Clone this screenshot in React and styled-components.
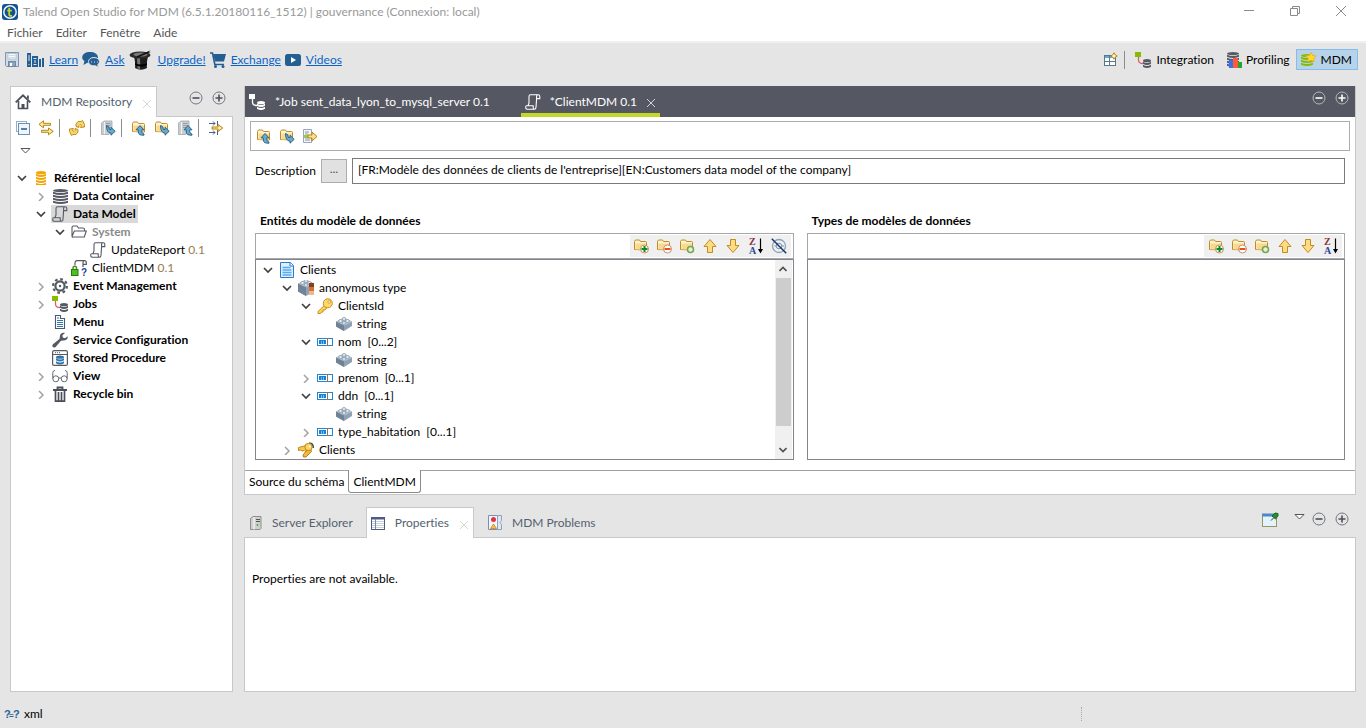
import React from 'react';
import styled, { createGlobalStyle, css } from 'styled-components';

const GlobalStyle = createGlobalStyle`
  *, *::before, *::after { box-sizing: border-box; }
  body {
    margin: 0;
    background: #e5e5e5;
    color: #000;
    font: 12px/18px Lato, "Noto Sans", sans-serif;
    font-variant-ligatures: none;
  }
  button, input { font: inherit; font-variant-ligatures: none; color: inherit; }
  svg { display: block; flex: none; }
`;

/* ---------- icons ---------- */

const Icon = ({ w = 16, h = 16, children, ...rest }) => (
  <svg width={w} height={h} viewBox={`0 0 ${w} ${h}`} fill="none" aria-hidden="true" {...rest}>
    {children}
  </svg>
);

const TalendLogo = () => (
  <Icon w={16} h={16}>
    <rect width="16" height="16" rx="3" fill="#13518f" />
    <circle cx="8" cy="8" r="6.2" stroke="#e9f2f8" strokeWidth="1.5" />
    <path d="M7.2 3.8v6.4q0 1.7 1.7 1.7h1.2M5.2 6.6h4.6" stroke="#c3d82c" strokeWidth="1.8" />
  </Icon>
);

const SaveIcon = () => (
  <Icon>
    <path d="M1.500.5h13v14h-12l-1-1z" fill="#cfdbe8" stroke="#7d94b2" />
    <rect x="4" y="1.500" width="8" height="5.500" fill="#f7fafc" stroke="#9badc4" strokeWidth=".6" />
    <path d="M5 3.500h6M5 5.500h6" stroke="#c9d4e0" strokeWidth=".8" />
    <rect x="4.500" y="9.500" width="7" height="5" fill="#8fa3bb" stroke="#7088a8" />
    <rect x="6" y="11" width="2" height="3" fill="#fff" />
  </Icon>
);

const BooksIcon = () => (
  <Icon w={17} h={16}>
    <path d="M0 1h4v14H0zM5 4h6v11H5zM12 7h2v8h-2zM15 6h2v9h-2z" fill="#235f92" />
    <path d="M2 3v6M2 12v1M6.500 6.500h3M6.500 12.500h3M8 8v3" stroke="#dfe8ef" />
  </Icon>
);

const ChatIcon = () => (
  <Icon w={18} h={16}>
    <path d="M8 0c4.400 0 8 2 8 5.500S12.400 11 8 11c-.9 0-1.800-.1-2.600-.3L1.500 13l.9-4C1 8 .2 6.900.2 5.500.2 2 3.600 0 8 0z" fill="#235f92" />
    <path d="M12 5.500c3 0 5.500 1.700 5.500 4 0 1.400-.8 2.400-1.800 3.100l.8 2.900-3-1.700c-3.800.4-7-1.300-7-4.300 0-2.300 2.500-4 5.500-4z" fill="#235f92" stroke="#e5e5e5" />
    <path d="M9 10h1M12 10h1M15 10h1" stroke="#dfe8ef" />
  </Icon>
);

const HatIcon = () => (
  <Icon w={24} h={20}>
    <path d="M5 7h14c-1 3-1.500 8-1 11q-6 3.500-12 0c.5-3 0-8-1-11z" fill="#1d1d1d" />
    <path d="M8 8h3q.5 6 0 11L8.500 18.500z" fill="#777" />
    <path d="M6 13q6 3 12 0v2q-6 3-12 0z" fill="#000" />
    <ellipse cx="11" cy="5" rx="10.500" ry="3.600" fill="#2b2b2b" />
    <ellipse cx="11.500" cy="4.500" rx="7" ry="2" fill="#777" />
    <path d="M8 7L22 1" stroke="#111" strokeWidth="1.600" />
    <path d="M20.500 1.500L23 .5" stroke="#eee" strokeWidth="1.500" />
  </Icon>
);

const CartIcon = () => (
  <Icon>
    <path d="M0 1h2.500l2.300 11.500H14" stroke="#235f92" strokeWidth="1.600" />
    <path d="M3 2h13l-2 7.500H5z" fill="#235f92" />
    <circle cx="5.500" cy="14.500" r="1.500" fill="#235f92" />
    <circle cx="13" cy="14.500" r="1.500" fill="#235f92" />
  </Icon>
);

const VideoIcon = () => (
  <Icon>
    <rect y="2" width="16" height="12" rx="2.500" fill="#235f92" />
    <path d="M6 5l5 3-5 3z" fill="#fff" />
  </Icon>
);

const HomeIcon = () => (
  <Icon>
    <path d="M.7 8.300L8 1.300l7.300 7" stroke="#4b4f5a" strokeWidth="1.800" />
    <path d="M12 1.500h1.800v4L12 4z" fill="#4b4f5a" />
    <path d="M3.500 7v7.500h9V7" stroke="#4b4f5a" strokeWidth="1.600" />
    <path d="M6.500 15v-5h3v5z" fill="#4b4f5a" />
  </Icon>
);

const CollapseIcon = () => (
  <Icon w={14} h={14}>
    <rect x=".5" y=".5" width="10" height="10" fill="#fff" stroke="#8fb0cf" />
    <rect x="2.500" y="2.500" width="11" height="11" fill="#eef6fc" stroke="#6b8fb5" />
    <path d="M5 8h6" stroke="#174a86" strokeWidth="1.400" />
  </Icon>
);

const LinkArrowsIcon = () => (
  <Icon>
    <path d="M5.500.8v2.500h7v2h-7v2.500L1 4.300z" fill="#fbe9a6" stroke="#b8860f" strokeLinejoin="round" />
    <path d="M10.500 8v2.300h-7v2h7v2.500l4.800-3.500z" fill="#fbe9a6" stroke="#b8860f" strokeLinejoin="round" />
  </Icon>
);

const RefreshIcon = () => (
  <Icon>
    <path
      d="M7 4L9 1.500h3L13.500.5 15.500 4.500V7L11.500 7.500 12.500 5.500 11 4.500 10 5.500V7.500L7 6.500z"
      fill="#f9d66c" stroke="#b8860f" strokeWidth=".9" strokeLinejoin="round"
    />
    <path
      d="M9 12l-2 2.500H4L2.500 15.500.5 11.500V9L4.500 8.500 3.500 10.500 5 11.500 6 10.500V8.500L9 9.500z"
      fill="#f9d66c" stroke="#b8860f" strokeWidth=".9" strokeLinejoin="round"
    />
  </Icon>
);

const BlueDown = ({ x = 0, y = 0 }) => (
  <path
    transform={`translate(${x} ${y})`}
    d="M.5.5Q3.400.8 3.400 4.500H5V2.300l4.200 4L5 10.200V8.200Q.5 8 .5.500z"
    fill="#6aa9cc" stroke="#1d5c86" strokeWidth=".9" strokeLinejoin="round"
  />
);

const BlueUp = ({ x = 0, y = 0 }) => (
  <path
    transform={`translate(${x} ${y})`}
    d="M4.500.5l4 4.300H6.300v2q0 1.700 2.200 2.200v1.200Q2.800 10.500 2.800 7V4.800H.5z"
    fill="#6aa9cc" stroke="#1d5c86" strokeWidth=".9" strokeLinejoin="round"
  />
);

const Server = () => (
  <>
    <path d="M1.500 3L4 1h8v10l-3 3.500H1.500z" fill="#c9ccd0" stroke="#a4a7ab" strokeWidth=".8" />
    <path d="M6 3.500h4.500M6 5.500h4.500M6 7.500h4.500" stroke="#8d9196" strokeWidth=".8" />
    <path d="M4.500 2v12" stroke="#f0f1f2" />
  </>
);

const ServerDownIcon = () => <Icon><Server /><BlueDown x={6} y={5} /></Icon>;
const ServerUpIcon = () => <Icon><Server /><BlueUp x={6.500} y={5} /></Icon>;

const Folder = () => (
  <>
    <path d="M1.500 11.500v-8l1-1.500h4l1 1.500h5q1 0 1 1v7.500z" fill="#fdf3d0" stroke="#c08a28" strokeLinejoin="round" />
    <path d="M2.500 5.500h10.500v6h-10.500z" fill="#f8d98d" />
  </>
);

const FolderUpIcon = () => <Icon><Folder /><BlueUp x={4.500} y={5} /></Icon>;
const FolderDownIcon = () => <Icon><Folder /><BlueDown x={6} y={5} /></Icon>;

const FolderAddIcon = () => (
  <Icon>
    <Folder />
    <circle cx="11.500" cy="11" r="4" fill="#fff" stroke="#bb9460" />
    <path d="M11.500 8v6M8.500 11h6" stroke="#118a1b" strokeWidth="2" />
  </Icon>
);
const FolderRemoveIcon = () => (
  <Icon>
    <Folder />
    <circle cx="11.500" cy="11" r="4" fill="#fff" stroke="#c19170" />
    <path d="M8.500 11h6" stroke="#e8501e" strokeWidth="2" />
  </Icon>
);
const FolderNewIcon = () => (
  <Icon>
    <Folder />
    <circle cx="11.500" cy="11.500" r="3" fill="#e3efd8" stroke="#74a54b" strokeWidth="1.500" />
  </Icon>
);

const FilterArrowIcon = () => (
  <Icon>
    <path d="M1 3.500h6M5 1.500l2 2-2 2M9.500 1v5M1 12.500h6M5 10.500l2 2-2 2M9.500 10v5" stroke="#47607f" />
    <path d="M4 7h6V4.500L14.800 8 10 11.500V9H4z" fill="#fbe3a0" stroke="#b8860f" strokeLinejoin="round" />
  </Icon>
);

const ExportIcon = () => (
  <Icon>
    <path d="M1.500 1.500h8v13h-8z" fill="#f2f5f9" stroke="#98a5ba" />
    <path d="M3 4h4M3 6h3M3 10h3M3 12h5" stroke="#8494b0" />
    <path d="M2 7h4v3H2z" fill="#9bc94c" />
    <path d="M6 7h4V4l5 4.500L10 13v-3H6z" fill="#fbe08a" stroke="#b38312" strokeLinejoin="round" />
  </Icon>
);

const TriangleIcon = () => (
  <Icon w={11} h={6}>
    <path d="M1 .5h9L5.500 5z" fill="#fff" stroke="#555" />
  </Icon>
);

const RoundIcon = ({ plus, color = '#74777e', bar = '#4c505a' }) => (
  <Icon w={14} h={14}>
    <circle cx="7" cy="7" r="6" stroke={color} />
    <path d={plus ? 'M3.500 7h7M7 3.500v7' : 'M3.500 7h7'} stroke={bar} strokeWidth="1.600" />
  </Icon>
);

const CrossIcon = ({ color = '#d5d5d5', size = 8 }) => (
  <Icon w={size} h={size}>
    <path d={`M0 0L${size} ${size}M${size} 0L0 ${size}`} stroke={color} />
  </Icon>
);

const MinimizeIcon = () => <Icon w={10} h={10}><path d="M0 4.500h10" stroke="#8b8b8b" /></Icon>;
const RestoreIcon = () => (
  <Icon w={10} h={10}>
    <path d="M.5 2.500h7v7h-7zM2.500 2.500v-2h7v7h-2" stroke="#8b8b8b" />
  </Icon>
);

const PerspectiveIcon = () => (
  <Icon w={15} h={15}>
    <rect x="1.500" y="3.500" width="11" height="10" fill="#fff" stroke="#56788d" />
    <path d="M2 5h8" stroke="#6aa4d3" strokeWidth="2" />
    <path d="M6.500 4v9M2 9.500h10" stroke="#56788d" />
    <path d="M11 .8l1.200 2 2 1.200-2 1.200-1.200 2-1.200-2-2-1.200 2-1.200z" fill="#fff4c8" stroke="#b8860f" />
  </Icon>
);

const Discs = ({ x = 0, y = 0, w = 10, n = 4, color = '#555962' }) => (
  <g transform={`translate(${x} ${y})`} fill={color}>
    <ellipse cx={w / 2} cy="1.700" rx={w / 2} ry="1.600" />
    {Array.from({ length: n - 1 }, (_, i) => (
      <path key={i} d={`M0 ${2.700 + i * 3}q${w / 2} 2.500 ${w} 0v2q-${w / 2} 2.600-${w} 0z`} />
    ))}
  </g>
);

const JobIcon = ({ box = '#85bc00', line = '#d9606b', db = '#555962' }) => (
  <Icon w={17} h={16}>
    <rect x="0" y="0" width="6" height="5" fill={box} />
    <path d="M3.500 5v3q0 3.500 4.500 3.500" stroke={line} strokeWidth="1.300" />
    <Discs x={8} y={7} w={8} n={3} color={db} />
  </Icon>
);

const ProfilingIcon = () => (
  <Icon w={16} h={16}>
    <Discs x={1} y={0} w={12} n={5} />
    <rect x="3" y="8" width="5" height="8" fill="#3c6ff0" />
    <rect x="7" y="6" width="5" height="10" fill="#ff5b3a" />
    <rect x="12" y="10" width="4" height="6" fill="#27a52a" />
  </Icon>
);

const MdmIcon = () => (
  <Icon w={16} h={16}>
    <Discs x={0} y={2} w={12} n={4} color="#85bc00" />
    <path d="M10 .5l1.700 3 3.600.5-2.600 2.300.6 3.400L10 8.200 6.700 9.700l.6-3.400L4.700 4l3.600-.5z" fill="#ffd92b" stroke="#f5a81c" strokeWidth=".8" />
  </Icon>
);

const RepoIcon = () => <Icon w={10} h={14}><Discs x={0} y={0} w={10} n={5} color="#f5a400" /></Icon>;
const ContainerIcon = () => <Icon w={15} h={16}><Discs x={0} y={1} w={15} n={5} /></Icon>;

const ModelIcon = ({ color = '#555962' }) => (
  <Icon>
    <path
      d="M5.500.800H13.200q1.600 0 1.600 1.600V4.600H11.600M11.600 4.600V2.400Q11.600.8 13.200.8M5.500.8Q4 .8 4 2.500V9L3 11.800H1.600Q.7 11.800.7 13.400T2.200 15.200h7q1.800 0 1.800-2L11.600 4.600M3 11.800h5.200v1.400q0 2 1 2"
      stroke={color} strokeWidth="1.100"
    />
  </Icon>
);

const OpenFolderIcon = () => (
  <Icon>
    <path d="M1 12V3.500Q1 2 2.500 2H6l1.500 2H12q1.500 0 1.500 1.500V7M1 12.500L3.300 7h12l-2 6H2Q1 13.500 1 12z" stroke="#555962" strokeWidth="1.100" />
  </Icon>
);

const LockedModelIcon = () => (
  <Icon>
    <path d="M4 5V3q0-2.300 2-2.300h7.500q1.800 0 1.800 2v1.600H12V3q0-2.300 1.500-2.300M12 4v3" stroke="#555962" strokeWidth="1.200" />
    <path d="M2 10V8q0-1.800 1.800-1.800T5.500 8v2" stroke="#3e8d18" strokeWidth="1.400" />
    <rect x=".5" y="9.500" width="6.500" height="6" fill="#4fbf1f" stroke="#2b7a10" />
    <text x="10" y="15.500" fontFamily="Liberation Sans, sans-serif" fontWeight="700" fontSize="10" fill="#1c3fa3">?</text>
  </Icon>
);

const GearIcon = () => (
  <Icon>
    <circle cx="8" cy="8" r="6.900" stroke="#555962" strokeWidth="2.200" strokeDasharray="2.700 2.720" />
    <circle cx="8" cy="8" r="4.600" stroke="#555962" strokeWidth="2.200" />
    <circle cx="8" cy="8" r="1.200" fill="#555962" />
  </Icon>
);

const MenuDocIcon = () => (
  <Icon>
    <path d="M3.500 1.500h5v3h4v10h-9z" fill="#fff" stroke="#4a5a70" strokeWidth="1.100" />
    <path d="M5 4h2M5 6.500h6M5 8.500h6M5 10.500h6M5 12.500h6" stroke="#2f74ad" />
  </Icon>
);

const WrenchIcon = () => (
  <Icon>
    <path d="M15.700 4.200L13 6.200l-2.200-.8-.4-2.200L13 1C10.500-.1 7.600 1.600 7.900 4.800L7.400 7 1 12.300c-2 2 .7 4.400 2.600 2.600L9 8.800l2.200-.2c3 .2 5-1.800 4.500-4.400z" fill="#555962" />
  </Icon>
);

const ProcedureIcon = () => (
  <Icon>
    <rect x=".6" y=".6" width="14.800" height="14.800" rx="1.500" fill="#fff" stroke="#555962" strokeWidth="1.200" />
    <path d="M1 4.500h14" stroke="#555962" />
    <path d="M3 2.700h1M5 2.700h1M7 2.700h1" stroke="#555962" />
    <Discs x={4} y={5.500} w={8} n={3} color="#2f74ad" />
  </Icon>
);

const GlassesIcon = () => (
  <Icon>
    <circle cx="3.800" cy="10.800" r="3" stroke="#666a72" />
    <circle cx="12.200" cy="10.800" r="3" stroke="#666a72" />
    <path d="M6.800 10.300q1.200-1 2.400 0M.8 10.500V4.500Q1 2.500 3 2.500M15.200 10.500V4.500Q15 2.500 13 2.500" stroke="#666a72" />
  </Icon>
);

const TrashIcon = () => (
  <Icon>
    <path d="M1 4h14M5.500 4V1.500h5V4" stroke="#4b4f5a" strokeWidth="1.800" />
    <path d="M3.500 5v10.200h9V5M6.500 6v9M9.500 6v9" stroke="#4b4f5a" strokeWidth="1.700" />
  </Icon>
);

const EntityIcon = () => (
  <Icon>
    <path d="M1.500.5h10l3 3v12h-13z" fill="#dcefff" stroke="#2f79ca" />
    <path d="M11 .5v3.500h3.500" fill="#fff" stroke="#2f79ca" />
    <path d="M3.500 5.500h8M3.500 8h9M3.500 10.500h9M3.500 13h9" stroke="#5aaaf0" strokeWidth="1.400" />
  </Icon>
);

const Brick = () => (
  <>
    <path d="M0 5.500l8-3.500 8 3.500v4.500l-8 5-8-4.500z" fill="#8fa1b4" />
    <path d="M0 5.500L8 9.500l8-4L8 2z" fill="#c3cfda" />
    <path d="M8 9.500V15l-8-4.500v-5z" fill="#6f8397" />
    <ellipse cx="4.500" cy="5" rx="2" ry="1.400" fill="#eef3f7" stroke="#7e93a6" strokeWidth=".8" />
    <ellipse cx="11.500" cy="5" rx="2" ry="1.400" fill="#eef3f7" stroke="#7e93a6" strokeWidth=".8" />
    <ellipse cx="8" cy="3" rx="2" ry="1.400" fill="#eef3f7" stroke="#7e93a6" strokeWidth=".8" />
    <ellipse cx="8" cy="7" rx="2" ry="1.300" fill="#eef3f7" stroke="#7e93a6" strokeWidth=".8" />
  </>
);

const BrickIcon = () => <Icon><Brick /></Icon>;
const ComplexIcon = () => (
  <Icon>
    <g transform="translate(0 1)"><Brick /></g>
    <g transform="translate(0 -2)"><Brick /></g>
    <rect x="11" y="3" width="5" height="4" fill="#86421f" />
    <rect x="11" y="7" width="5" height="4" fill="#d2713c" />
    <rect x="11" y="11" width="5" height="4" fill="#f0b58c" />
  </Icon>
);

const KeyIcon = () => (
  <Icon>
    <path d="M8 7L1 13.500V15.500h2.500l1-1.500h1.500v-2H8l2-2.500z" fill="#fbd55a" stroke="#c98f1c" strokeLinejoin="round" />
    <circle cx="10.800" cy="5.300" r="4.500" fill="#fddb68" stroke="#c98f1c" />
    <circle cx="12.200" cy="4" r="1.300" fill="#fff" stroke="#c98f1c" strokeWidth=".8" />
  </Icon>
);

const KeysIcon = () => (
  <Icon>
    <path d="M11 1.200q4.500-.5 4.200 4.800" stroke="#38414d" strokeWidth="1.500" />
    <path d="M9 8l-4 5 .5 2H8l5.500-5.500-1-2.500z" fill="#f3b93a" stroke="#a87410" strokeWidth=".9" strokeLinejoin="round" />
    <path d="M8 3.500L.5 5.500v3l2.500-.5 1 1.200 2-.8 1 1 3-1.500z" fill="#f8c848" stroke="#b8801c" strokeWidth=".9" strokeLinejoin="round" />
    <circle cx="10.500" cy="5" r="3.700" fill="#fcd45a" stroke="#b8801c" strokeWidth=".9" />
    <circle cx="11.800" cy="4.500" r="1" fill="#fff" />
  </Icon>
);

const ElementIcon = () => (
  <Icon>
    <rect x=".5" y="4.500" width="15" height="7" fill="#fff" stroke="#2384cf" />
    <rect x="2" y="6" width="7" height="4" fill="#1c7fd0" />
    <path d="M4.500 7v3M6.500 7v3" stroke="#a9d2f3" strokeWidth=".7" />
    <path d="M10.500 4v8M9 4.500h3M9 11.500h3" stroke="#777" />
  </Icon>
);

const ArrowIcon = ({ down }) => (
  <Icon>
    <path
      d={down ? 'M5.500 1.500h5v6h3.500L8 14.500 2 7.500h3.500z' : 'M5.500 14.500h5v-6H14L8 1.500 2 8.500h3.500z'}
      fill="#fbdc85" stroke="#c48c20" strokeLinejoin="round"
    />
  </Icon>
);

const SortIcon = () => (
  <Icon w={16} h={18}>
    <g fontFamily="Liberation Serif, serif" fontWeight="700" fontSize="10">
      <text x="1" y="8" fill="#8c2f3f">Z</text>
      <text x="1" y="17" fill="#2f4a94">A</text>
    </g>
    <path d="M12.500 1.500v13" stroke="#000" strokeWidth="1.200" />
    <path d="M10 12h5l-2.500 4.500z" fill="#000" />
  </Icon>
);

const HideIcon = () => (
  <Icon>
    <circle cx="8" cy="8" r="6.500" stroke="#8aa4bb" strokeWidth="1.300" />
    <circle cx="8" cy="8" r="2.800" stroke="#7592ad" />
    <path d="M3.500 8h2M11 8h2" stroke="#7592ad" />
    <path d="M.8.800l14.400 14.400" stroke="#1b3470" strokeWidth="1.500" />
  </Icon>
);

const ServerTabIcon = () => (
  <Icon w={12} h={14}>
    <path d="M.5 2.500L3 .5h8v12l-1 1H.5z" fill="#cfcfcf" stroke="#8f8f8f" />
    <path d="M4 1v12.500" stroke="#fff" />
    <path d="M6 3.500h4M6 5.500h4" stroke="#555" />
    <path d="M7.500 8v2" stroke="#4aa84a" strokeWidth="1.500" />
  </Icon>
);

const PropertiesIcon = () => (
  <Icon w={14} h={13}>
    <rect x=".5" y=".5" width="13" height="12" fill="#fff" stroke="#4d5d86" />
    <path d="M0 1.500h14" stroke="#4d5d86" strokeWidth="2" />
    <path d="M1 4.500h12M1 6.500h12M1 8.500h12M1 10.500h12" stroke="#c7cfdd" />
    <path d="M4.500 2v10" stroke="#7b88a8" />
  </Icon>
);

const ProblemsIcon = () => (
  <Icon w={14} h={15}>
    <path d="M.5.5h9v14h-9z" fill="#f4f6fa" stroke="#7b8db0" />
    <path d="M9.500.5h4v5l-1.500 2 1.500 2v5h-4z" fill="#dfe8f2" stroke="#8aa3bd" />
    <circle cx="5.500" cy="4.500" r="2.500" fill="#dd3744" />
    <path d="M5.500 9l3 4.500h-6z" fill="#fbc04a" stroke="#c88316" strokeWidth=".8" />
  </Icon>
);

const PinIcon = () => (
  <Icon w={17} h={15}>
    <rect x=".5" y="2.500" width="14" height="12" fill="#e3f3fa" stroke="#9b9468" />
    <path d="M0 3h12" stroke="#4b88c7" strokeWidth="3" />
    <path d="M9 8.500l3-3" stroke="#333" />
    <path d="M10 4l3-3 3 .5V4l-2.500 3z" fill="#2b8a35" stroke="#186a24" />
  </Icon>
);

const VariableIcon = () => (
  <Icon>
    <g fontFamily="Liberation Sans, sans-serif" fontWeight="700" fill="#2a6496">
      <text x="0" y="12" fontSize="11">?</text>
      <text x="5" y="12" fontSize="8">=</text>
      <text x="9" y="12" fontSize="11">?</text>
    </g>
  </Icon>
);

const Chevron = ({ open }) => (
  <Icon w={10} h={10}>
    {open
      ? <path d="M1 3l4 4 4-4" stroke="#404040" strokeWidth="1.700" />
      : <path d="M3 2l4 4-4 4" stroke="#a2a2a2" strokeWidth="1.500" />}
  </Icon>
);

const ScrollArrow = ({ up }) => (
  <Icon w={8} h={6}>
    <path d={up ? 'M.5 5L4 1.500 7.500 5' : 'M.5 1L4 4.500 7.500 1'} stroke="#505050" strokeWidth="1.600" />
  </Icon>
);

/* ---------- layout ---------- */

const Window = styled.div`
  display: flex;
  flex-direction: column;
  min-height: 100vh;
`;

const TitleBar = styled.header`
  display: flex;
  align-items: center;
  height: 23px;
  padding: 0 20px 0 2px;
  gap: 5px;
  background: #fff;
  color: #999;
`;

const Title = styled.h1`
  flex: 1;
  margin: 0;
  font-size: 12px;
  font-weight: 400;
`;

const WindowButtons = styled.div`
  display: flex;
  gap: 36px;
  margin-top: -2px;
`;

const IconButton = styled.button`
  display: flex;
  align-items: center;
  justify-content: center;
  width: ${(p) => p.$w || 23}px;
  height: ${(p) => p.$h || 22}px;
  flex: none;
  padding: 0;
  border: 0;
  background: none;
`;

const MenuBar = styled.nav`
  display: flex;
  gap: 13px;
  height: 20px;
  padding: 1px 7px 0;
  background: #fff;
  border-bottom: 2px solid #f0f0f0;
`;

const MenuItem = styled.button`
  padding: 0;
  border: 0;
  background: none;
  line-height: 17px;
  color: #555;
`;

const MainToolbar = styled.div`
  display: flex;
  align-items: center;
  height: 33px;
  padding: 0 8px 0 4px;
  margin-bottom: 10px;
`;

const Links = styled.div`
  display: flex;
  flex: 1;
  align-items: center;
  gap: 4px;
  margin-left: 7px;
`;

const ToolLink = styled.a`
  display: flex;
  align-items: center;
  gap: 5px;
  color: #0a64c8;
`;

const Perspectives = styled.div`
  display: flex;
  align-items: center;
`;

const Perspective = styled.button`
  display: flex;
  align-items: center;
  gap: 4px;
  height: 21px;
  padding: 0 6px 0 4px;
  border: 1px solid ${(p) => (p.$active ? '#86bdec' : 'transparent')};
  background: ${(p) => (p.$active ? '#b7d3ea' : 'none')};
  & + & { padding-right: 5px; }
`;

const Separator = styled.span`
  flex: none;
  width: 1px;
  height: 18px;
  margin: 0 5px 0 2px;
  background: #8c8c8c;
`;

const Workbench = styled.main`
  display: grid;
  grid-template-columns: 223px minmax(0, 1fr);
  gap: 11px;
  flex: 1;
  padding: 0 10px;
`;

const Panel = styled.section`
  display: flex;
  flex-direction: column;
  flex: ${(p) => (p.$grow ? '1' : 'none')};
  background: #fff;
  border: 1px solid #c8c8c8;
  border-top: 0;
`;

const EditorColumn = styled.div`
  display: flex;
  flex-direction: column;
  gap: 12px;
  min-width: 0;
`;

const ViewHeader = styled.div`
  display: flex;
  height: 31px;
  margin: 0 -1px;
  padding-right: 1px;
  background: #e5e5e5;
  box-shadow: inset 0 -1px #c8c8c8;
`;

const ViewTab = styled.button`
  display: flex;
  align-items: center;
  gap: 10px;
  height: 31px;
  padding: 0 13px 0 ${(p) => p.$lead || 6}px;
  border: 0;
  background: none;
  color: #54616f;
  ${(p) => p.$active && css`
    padding: 0 5px 0 4px;
    background: #fff;
    border: 1px solid #c8c8c8;
    border-bottom: 0;
  `}
`;

const TabCross = styled.span`
  margin: 3px 0 0 1px;
`;

const HeaderTools = styled.div`
  display: flex;
  margin-left: auto;
  padding: 1px 2px 0 0;
`;

const RepoToolbar = styled.div`
  display: flex;
  flex-wrap: wrap;
  align-items: center;
  padding-bottom: 5px;
`;

const Tree = styled.ul`
  flex: 1;
  min-width: 0;
  margin: 0;
  padding: 1px 0 0 ${(p) => p.$inset}px;
  list-style: none;
`;

const TreeItem = styled.li`
  display: flex;
  height: 18px;
  padding-left: ${(p) => p.$depth * 19}px;
`;

const Toggle = styled.span`
  display: flex;
  align-items: center;
  justify-content: center;
  width: 17px;
  margin-right: 2px;
`;

const Label = styled.span`
  display: flex;
  align-items: center;
  padding-right: 2px;
  white-space: pre;
  font-weight: ${(p) => (p.$bold ? 700 : 400)};
  color: ${(p) => (p.$muted ? '#8a8a8a' : 'inherit')};
  background: ${(p) => (p.$selected ? '#d9d9d9' : 'none')};
`;

const IconCell = styled.span`
  display: flex;
  justify-content: center;
  width: 18px;
  margin-right: 4px;
`;

const Version = styled.span`
  color: #9a7b50;
`;

const EditorTabs = styled.div`
  display: flex;
  height: 31px;
  background: #555862;
  color: #fff;
`;

const EditorTab = styled.button`
  display: flex;
  align-items: center;
  gap: 9px;
  padding: 4px 5px 0 4px;
  margin-right: 26px;
  border: 0;
  border-bottom: 4px solid ${(p) => (p.$active ? '#c3d728' : 'transparent')};
  background: none;
`;

const EditorBody = styled.div`
  display: flex;
  flex-direction: column;
  padding: 4px 5px 0;
`;

const EditorToolbar = styled.div`
  display: flex;
  align-items: center;
  height: 30px;
  padding: 0 1px;
  border: 1px solid #aaacae;
`;

const DescriptionRow = styled.div`
  display: flex;
  align-items: center;
  gap: 5px;
  padding: 7px 5px 0;
`;

const MoreButton = styled.button`
  width: 26px;
  height: 24px;
  padding: 0 0 4px;
  border: 1px solid #adadad;
  background: #e1e1e1;
  color: #3c5876;
  line-height: 16px;
`;

const DescriptionInput = styled.input`
  flex: 1;
  min-width: 0;
  height: 26px;
  padding: 0 5px 4px;
  border: 1px solid #7a7a7a;
  background: #fff;
`;

const Models = styled.div`
  display: grid;
  grid-template-columns: 1fr 1fr;
  gap: 13px;
  padding: 28px 5px 10px;
`;

const Model = styled.section`
  display: flex;
  flex-direction: column;
  min-width: 0;
`;

const ModelTitle = styled.h2`
  margin: 0 5px 3px;
  font-size: 12px;
  line-height: 18px;
  font-weight: 700;
`;

const ModelToolbar = styled.div`
  display: flex;
  justify-content: flex-end;
  height: 26px;
  padding: 1px 2px;
  border: 1px solid #a5a7a9;
`;

const ModelTools = styled.div`
  display: flex;
  align-items: center;
  background: #f0f0f0;
`;

const ModelBox = styled.div`
  display: flex;
  flex: 1;
  padding-right: 1px;
  border: 1px solid #82858c;
`;

const ScrollBar = styled.div`
  display: flex;
  flex-direction: column;
  align-items: center;
  justify-content: space-between;
  width: 17px;
  background: #f0f0f0;
`;

const ScrollEnd = styled.span`
  display: flex;
  align-items: center;
  height: 18px;
`;

const ScrollThumb = styled.span`
  width: 15px;
  height: 148px;
  margin-bottom: 15px;
  background: #cdcdcd;
`;

const PageTabs = styled.div`
  display: flex;
  height: 24px;
  border-top: 1px solid #a0a0a0;
`;

const PageTab = styled.button`
  height: ${(p) => (p.$active ? 23 : 22)}px;
  margin-top: ${(p) => (p.$active ? -1 : 0)}px;
  padding: 0 4px;
  border: 0;
  background: #fff;
  ${(p) => p.$active && css`
    padding-top: 2px;
    border: 1px solid #8c8c8c;
    border-top: 0;
    border-radius: 0 0 3px 3px;
  `}
`;

const Message = styled.p`
  margin: 32px 7px;
`;

const StatusBar = styled.footer`
  display: flex;
  align-items: center;
  gap: 4px;
  height: 36px;
  padding: 8px 0 0 4px;
`;

const StatusGrip = styled.span`
  height: 14px;
  margin-left: auto;
  margin-right: 284px;
  border-left: 1px dotted #a8a8a8;
`;

/* ---------- data ---------- */

const repository = [
  { depth: 0, open: true, icon: <RepoIcon />, text: 'Référentiel local', bold: true },
  { depth: 1, open: false, icon: <ContainerIcon />, text: 'Data Container', bold: true },
  { depth: 1, open: true, icon: <ModelIcon />, text: 'Data Model', bold: true, selected: true },
  { depth: 2, open: true, icon: <OpenFolderIcon />, text: 'System', bold: true, muted: true },
  { depth: 3, icon: <ModelIcon />, text: 'UpdateReport ', version: '0.1' },
  { depth: 2, icon: <LockedModelIcon />, text: 'ClientMDM ', version: '0.1' },
  { depth: 1, open: false, icon: <GearIcon />, text: 'Event Management', bold: true },
  { depth: 1, open: false, icon: <JobIcon />, text: 'Jobs', bold: true },
  { depth: 1, icon: <MenuDocIcon />, text: 'Menu', bold: true },
  { depth: 1, icon: <WrenchIcon />, text: 'Service Configuration', bold: true },
  { depth: 1, icon: <ProcedureIcon />, text: 'Stored Procedure', bold: true },
  { depth: 1, open: false, icon: <GlassesIcon />, text: 'View', bold: true },
  { depth: 1, open: false, icon: <TrashIcon />, text: 'Recycle bin', bold: true },
];

const entities = [
  { depth: 0, open: true, icon: <EntityIcon />, text: 'Clients' },
  { depth: 1, open: true, icon: <ComplexIcon />, text: 'anonymous type' },
  { depth: 2, open: true, icon: <KeyIcon />, text: 'ClientsId' },
  { depth: 3, icon: <BrickIcon />, text: 'string' },
  { depth: 2, open: true, icon: <ElementIcon />, text: 'nom  [0...2]' },
  { depth: 3, icon: <BrickIcon />, text: 'string' },
  { depth: 2, open: false, icon: <ElementIcon />, text: 'prenom  [0...1]' },
  { depth: 2, open: true, icon: <ElementIcon />, text: 'ddn  [0...1]' },
  { depth: 3, icon: <BrickIcon />, text: 'string' },
  { depth: 2, open: false, icon: <ElementIcon />, text: 'type_habitation  [0...1]' },
  { depth: 1, open: false, icon: <KeysIcon />, text: 'Clients' },
];

const TreeView = ({ label, rows, inset = 2 }) => (
  <Tree role="tree" aria-label={label} $inset={inset}>
    {rows.map((r, i) => (
      <TreeItem key={i} role="treeitem" aria-level={r.depth + 1} aria-expanded={r.open} $depth={r.depth}>
        <Toggle>{r.open !== undefined && <Chevron open={r.open} />}</Toggle>
        <Label $bold={r.bold} $muted={r.muted} $selected={r.selected}>
          <IconCell>{r.icon}</IconCell>
          {r.text}
          {r.version && <Version>{r.version}</Version>}
        </Label>
      </TreeItem>
    ))}
  </Tree>
);

const modelTools = [
  ['Add', <FolderAddIcon />],
  ['Remove', <FolderRemoveIcon />],
  ['New', <FolderNewIcon />],
  ['Move up', <ArrowIcon />],
  ['Move down', <ArrowIcon down />],
  ['Sort', <SortIcon />],
];

const ModelPane = ({ title, tools, children }) => (
  <Model>
    <ModelTitle>{title}</ModelTitle>
    <ModelToolbar>
      <ModelTools>
        {tools.map(([name, icon]) => <IconButton key={name} aria-label={name}>{icon}</IconButton>)}
      </ModelTools>
    </ModelToolbar>
    <ModelBox>{children}</ModelBox>
  </Model>
);

export default function App() {
  return (
    <Window>
      <GlobalStyle />
      <TitleBar>
        <TalendLogo />
        <Title>Talend Open Studio for MDM (6.5.1.20180116_1512) | gouvernance (Connexion: local)</Title>
        <WindowButtons>
          <IconButton $w={10} aria-label="Minimize"><MinimizeIcon /></IconButton>
          <IconButton $w={10} aria-label="Restore"><RestoreIcon /></IconButton>
          <IconButton $w={10} aria-label="Close"><CrossIcon size={10} color="#8b8b8b" /></IconButton>
        </WindowButtons>
      </TitleBar>
      <MenuBar>
        {['Fichier', 'Editer', 'Fenêtre', 'Aide'].map((m) => <MenuItem key={m}>{m}</MenuItem>)}
      </MenuBar>

      <MainToolbar>
        <IconButton $w={16} aria-label="Save"><SaveIcon /></IconButton>
        <Links>
          <ToolLink href="#learn"><BooksIcon />Learn</ToolLink>
          <ToolLink href="#ask"><ChatIcon />Ask</ToolLink>
          <ToolLink href="#upgrade"><HatIcon />Upgrade!</ToolLink>
          <ToolLink href="#exchange"><CartIcon />Exchange</ToolLink>
          <ToolLink href="#videos"><VideoIcon />Videos</ToolLink>
        </Links>
        <Perspectives>
          <IconButton aria-label="Open perspective"><PerspectiveIcon /></IconButton>
          <Separator />
          <Perspective><JobIcon />Integration</Perspective>
          <Perspective><ProfilingIcon />Profiling</Perspective>
          <Perspective $active><MdmIcon />MDM</Perspective>
        </Perspectives>
      </MainToolbar>

      <Workbench>
        <Panel>
          <ViewHeader>
            <ViewTab $active><HomeIcon />MDM Repository<TabCross><CrossIcon /></TabCross></ViewTab>
            <HeaderTools>
              <IconButton aria-label="Minimize view"><RoundIcon /></IconButton>
              <IconButton aria-label="Maximize view"><RoundIcon plus /></IconButton>
            </HeaderTools>
          </ViewHeader>
          <RepoToolbar>
            <IconButton aria-label="Collapse all"><CollapseIcon /></IconButton>
            <IconButton aria-label="Link with editor"><LinkArrowsIcon /></IconButton>
            <Separator />
            <IconButton aria-label="Refresh"><RefreshIcon /></IconButton>
            <Separator />
            <IconButton aria-label="Import from server"><ServerDownIcon /></IconButton>
            <Separator />
            <IconButton aria-label="Import items"><FolderUpIcon /></IconButton>
            <IconButton aria-label="Export items"><FolderDownIcon /></IconButton>
            <IconButton aria-label="Deploy to server"><ServerUpIcon /></IconButton>
            <Separator />
            <IconButton aria-label="Filter"><FilterArrowIcon /></IconButton>
            <IconButton $w={28} $h={24} aria-label="View menu"><TriangleIcon /></IconButton>
          </RepoToolbar>
          <TreeView label="MDM Repository" rows={repository} />
        </Panel>

        <EditorColumn>
          <Panel>
            <EditorTabs>
              <EditorTab>
                <JobIcon box="#fff" line="#fff" db="#fff" />*Job sent_data_lyon_to_mysql_server 0.1
              </EditorTab>
              <EditorTab $active>
                <ModelIcon color="#fff" />*ClientMDM 0.1
                <TabCross><CrossIcon color="#d0d2d6" /></TabCross>
              </EditorTab>
              <HeaderTools>
                <IconButton aria-label="Minimize editor"><RoundIcon color="#b4b6bc" bar="#fff" /></IconButton>
                <IconButton aria-label="Maximize editor"><RoundIcon plus color="#b4b6bc" bar="#fff" /></IconButton>
              </HeaderTools>
            </EditorTabs>
            <EditorBody>
              <EditorToolbar>
                <IconButton aria-label="Import"><FolderUpIcon /></IconButton>
                <IconButton aria-label="Export"><FolderDownIcon /></IconButton>
                <IconButton aria-label="Export schema"><ExportIcon /></IconButton>
              </EditorToolbar>
              <DescriptionRow>
                <label htmlFor="description">Description</label>
                <MoreButton aria-label="Edit description">...</MoreButton>
                <DescriptionInput
                  id="description"
                  defaultValue="[FR:Modèle des données de clients de l'entreprise][EN:Customers data model of the company]"
                />
              </DescriptionRow>
              <Models>
                <ModelPane
                  title="Entités du modèle de données"
                  tools={[...modelTools, ['Hide inherited', <HideIcon />]]}
                >
                  <TreeView label="Entités du modèle de données" rows={entities} inset={3} />
                  <ScrollBar>
                    <ScrollEnd><ScrollArrow up /></ScrollEnd>
                    <ScrollThumb />
                    <ScrollEnd><ScrollArrow /></ScrollEnd>
                  </ScrollBar>
                </ModelPane>
                <ModelPane title="Types de modèles de données" tools={modelTools} />
              </Models>
            </EditorBody>
            <PageTabs>
              <PageTab>Source du schéma</PageTab>
              <PageTab $active>ClientMDM</PageTab>
            </PageTabs>
          </Panel>

          <Panel $grow>
            <ViewHeader>
              <ViewTab><ServerTabIcon />Server Explorer</ViewTab>
              <ViewTab $active><PropertiesIcon />Properties<TabCross><CrossIcon /></TabCross></ViewTab>
              <ViewTab $lead={14}><ProblemsIcon />MDM Problems</ViewTab>
              <HeaderTools>
                <IconButton $w={42} aria-label="Pin to selection"><PinIcon /></IconButton>
                <IconButton $w={16} $h={18} aria-label="View menu"><TriangleIcon /></IconButton>
                <IconButton aria-label="Minimize view"><RoundIcon /></IconButton>
                <IconButton aria-label="Maximize view"><RoundIcon plus /></IconButton>
              </HeaderTools>
            </ViewHeader>
            <Message>Properties are not available.</Message>
          </Panel>
        </EditorColumn>
      </Workbench>

      <StatusBar>
        <VariableIcon />
        xml
        <StatusGrip />
      </StatusBar>
    </Window>
  );
}
